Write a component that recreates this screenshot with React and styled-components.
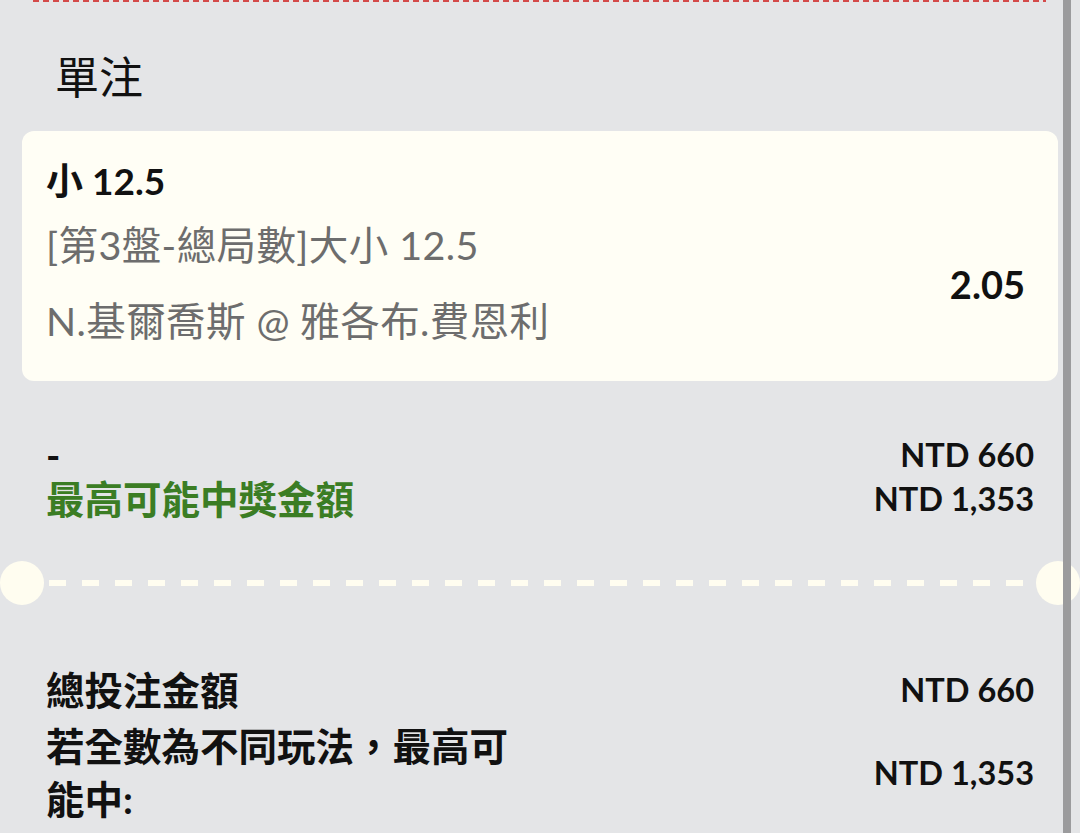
import React from 'react'
import styled, { createGlobalStyle } from 'styled-components'

const GlobalStyle = createGlobalStyle`
  html, body {
    margin: 0;
    padding: 0;
    background: #e4e5e7;
  }
  body {
    font-family: Lato, "Noto Sans CJK TC", sans-serif;
    color: #111111;
  }
`

const Page = styled.div`
  position: relative;
  width: 1080px;
  height: 833px;
  overflow: hidden;
  background: #e4e5e7;
`

const ScrollBar = styled.div`
  position: absolute;
  top: 0;
  right: 9px;
  width: 8px;
  height: 100%;
  background: #9b9b9d;
`

const TopRule = styled.div`
  margin: 0 34px 0 33px;
  height: 2px;
  background: repeating-linear-gradient(90deg, #d44a4a 0 6px, transparent 6px 10px);
`

const SectionTitle = styled.h2`
  margin: 49px 0 28px 55px;
  font-size: 44px;
  line-height: 52px;
  font-weight: 400;
`

const Card = styled.div`
  margin: 0 22px;
  padding: 28px 33px 38px 24px;
  display: flex;
  justify-content: space-between;
  background: #fffef5;
  border-radius: 12px;
`

const CardInfo = styled.div`
  display: flex;
  flex-direction: column;
`

const Selection = styled.div`
  font-size: 37px;
  line-height: 44px;
  font-weight: 700;
`

const InfoLine = styled.div`
  margin-top: ${({ gap }) => gap}px;
  font-size: 39.5px;
  line-height: 44px;
  letter-spacing: 0.4px;
  color: #6d6d6d;
  white-space: nowrap;
`

const Odds = styled.div`
  align-self: center;
  margin-top: 66px;
  font-size: 38px;
  line-height: 44px;
  font-weight: 700;
`

const Row = styled.div`
  display: flex;
  justify-content: space-between;
  align-items: center;
  margin: ${({ top }) => top || 0}px 46px 0;
`

const Label = styled.div`
  max-width: ${({ wrap }) => (wrap ? '480px' : 'none')};
  font-size: 38.5px;
  line-height: ${({ lh }) => lh || 44}px;
  font-weight: 700;
  color: ${({ green }) => (green ? '#3b7d24' : '#111111')};
`

const Amount = styled.div`
  font-size: 32.5px;
  line-height: 44px;
  font-weight: 700;
  white-space: nowrap;
`

const Divider = styled.div`
  display: flex;
  align-items: center;
  margin-top: 40px;
  height: 44px;
`

const Notch = styled.div`
  flex: 0 0 44px;
  height: 44px;
  border-radius: 50%;
  background: #fffdf0;
`

const DashLine = styled.div`
  flex: 1;
  height: 6px;
  margin: 0 5px;
  background: repeating-linear-gradient(90deg, #fffdf0 0 17px, transparent 17px 33px);
`

export default function App() {
  return (
    <Page>
      <GlobalStyle />
      <TopRule />
      <SectionTitle>單注</SectionTitle>
      <Card>
        <CardInfo>
          <Selection>小 12.5</Selection>
          <InfoLine gap={20}>[第3盤-總局數]大小 12.5</InfoLine>
          <InfoLine gap={32}>N.基爾喬斯 @ 雅各布.費恩利</InfoLine>
        </CardInfo>
        <Odds>2.05</Odds>
      </Card>
      <Row top={52}>
        <Label>-</Label>
        <Amount>NTD 660</Amount>
      </Row>
      <Row>
        <Label green>最高可能中獎金額</Label>
        <Amount>NTD 1,353</Amount>
      </Row>
      <Divider>
        <Notch />
        <DashLine />
        <Notch />
      </Divider>
      <Row top={63}>
        <Label>總投注金額</Label>
        <Amount>NTD 660</Amount>
      </Row>
      <Row top={8}>
        <Label wrap lh={53}>若全數為不同玩法，最高可能中:</Label>
        <Amount>NTD 1,353</Amount>
      </Row>
      <ScrollBar />
    </Page>
  )
}
